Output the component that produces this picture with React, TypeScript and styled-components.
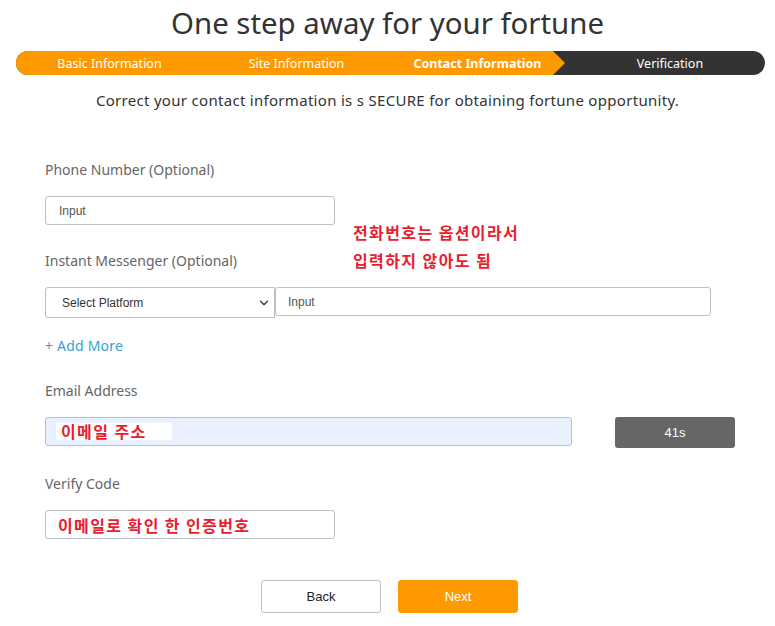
import styled, { createGlobalStyle, css } from "styled-components";
import { ChevronDown } from "lucide-react";

const GlobalStyle = createGlobalStyle`
  html, body {
    margin: 0;
    padding: 0;
    background: #fff;
  }
  body {
    font-family: "Noto Sans", "Open Sans", sans-serif;
    color: #333;
  }
`;

const steps = [
  { label: "Basic Information", state: "done" },
  { label: "Site Information", state: "done" },
  { label: "Contact Information", state: "current" },
  { label: "Verification", state: "todo" },
] as const;

type StepState = (typeof steps)[number]["state"];

const App = () => {
  return (
    <Page>
      <GlobalStyle />
      <Title>One step away for your fortune</Title>
      <Progress>
        {steps.map((s) => (
          <Step key={s.label} $state={s.state}>
            {s.label}
          </Step>
        ))}
      </Progress>
      <Subtitle>Correct your contact information is s SECURE for obtaining fortune opportunity.</Subtitle>

      <Form>
        <Label>Phone Number (Optional)</Label>
        <PhoneRow>
          <TextInput $width={290} placeholder="Input" />
          <Note>
            전화번호는 옵션이라서
            <br />
            입력하지 않아도 됨
          </Note>
        </PhoneRow>

        <Label $top={26}>Instant Messenger (Optional)</Label>
        <MessengerRow>
          <SelectBox>
            <span>Select Platform</span>
            <ChevronDown size={14} strokeWidth={2.6} color="#444" />
          </SelectBox>
          <TextInput $width={436} $pad={12} placeholder="Input" />
        </MessengerRow>

        <AddMore>+ Add More</AddMore>

        <Label $top={25}>Email Address</Label>
        <EmailRow>
          <FieldBox $width={527} $filled>
            <Highlight>이메일 주소</Highlight>
          </FieldBox>
          <TimerButton>41s</TimerButton>
        </EmailRow>

        <Label $top={26}>Verify Code</Label>
        <FieldBox $width={290}>
          <NoteInline>이메일로 확인 한 인증번호</NoteInline>
        </FieldBox>
      </Form>

      <Actions>
        <ActionButton>Back</ActionButton>
        <ActionButton $primary>Next</ActionButton>
      </Actions>
    </Page>
  );
};

const Page = styled.div`
  width: 775px;
  padding-bottom: 12px;
`;

const Title = styled.h1`
  margin: 0;
  padding-top: 1px;
  font-size: 29.4px;
  font-weight: 400;
  line-height: 44px;
  text-align: center;
  color: #333;
`;

const Progress = styled.div`
  display: flex;
  margin: 6px 0 0 16px;
  width: 749px;
  height: 24px;
  border-radius: 12px;
  overflow: hidden;
  background: #333;
`;

const Step = styled.div<{ $state: StepState }>`
  display: flex;
  align-items: center;
  justify-content: center;
  height: 100%;
  font-size: 12.5px;
  color: #fff;
  white-space: nowrap;
  ${({ $state }) =>
    $state === "done" &&
    css`
      width: 187px;
      background: #ff9900;
    `}
  ${({ $state }) =>
    $state === "current" &&
    css`
      width: 175px;
      font-weight: 700;
      background: #ff9900;
      clip-path: polygon(0 0, calc(100% - 12px) 0, 100% 50%, calc(100% - 12px) 100%, 0 100%);
    `}
  ${({ $state }) =>
    $state === "todo" &&
    css`
      flex: 1;
      padding-left: 10px;
    `}
`;

const Subtitle = styled.p`
  margin: 14px 0 0;
  font-size: 15px;
  line-height: 22px;
  letter-spacing: 0.3px;
  text-align: center;
  color: #333;
`;

const Form = styled.div`
  display: flex;
  flex-direction: column;
  align-items: flex-start;
  padding: 0 0 0 45px;
  margin-top: 49px;
`;

const Label = styled.div<{ $top?: number }>`
  margin-top: ${({ $top }) => $top ?? 0}px;
  font-size: 14px;
  line-height: 20px;
  color: #666;
`;

const PhoneRow = styled.div`
  position: relative;
  margin-top: 16px;
`;

const inputBase = css`
  box-sizing: border-box;
  height: 29px;
  border: 1px solid #bcc0c8;
  border-radius: 3px;
  background: #fff;
  font-family: "Liberation Sans", Arial, sans-serif;
  font-size: 12px;
  color: #555;
`;

const TextInput = styled.input<{ $width: number; $pad?: number }>`
  ${inputBase};
  display: block;
  width: ${({ $width }) => $width}px;
  padding: 0 0 0 ${({ $pad }) => $pad ?? 13}px;
  outline: none;
  &::placeholder {
    color: #555;
  }
`;

const koreanNote = css`
  font-family: "Noto Sans CJK KR", sans-serif;
  font-size: 16px;
  font-weight: 700;
  letter-spacing: 1.4px;
  color: #e8202e;
`;

const Note = styled.div`
  ${koreanNote};
  position: absolute;
  left: 308px;
  top: 22px;
  line-height: 28px;
  white-space: nowrap;
`;

const MessengerRow = styled.div`
  display: flex;
  align-items: flex-start;
  margin-top: 16px;
`;

const SelectBox = styled.div`
  ${inputBase};
  display: flex;
  align-items: center;
  justify-content: space-between;
  width: 230px;
  height: 31px;
  padding: 0 3px 0 16px;
  color: #333;
  border-radius: 3px 0 0 3px;
`;

const AddMore = styled.div`
  margin-top: 18px;
  font-size: 14px;
  line-height: 20px;
  letter-spacing: 0.2px;
  color: #3a9fd2;
`;

const EmailRow = styled.div`
  display: flex;
  align-items: flex-start;
  gap: 43px;
  margin-top: 16px;
`;

const FieldBox = styled.div<{ $width: number; $filled?: boolean }>`
  ${inputBase};
  display: flex;
  align-items: center;
  width: ${({ $width }) => $width}px;
  padding-left: 10px;
  margin-top: ${({ $filled }) => ($filled ? 0 : 16)}px;
  background: ${({ $filled }) => ($filled ? "#e8f0fe" : "#fff")};
`;

const Highlight = styled.span`
  ${koreanNote};
  display: block;
  width: 111px;
  height: 17px;
  line-height: 17px;
  padding-left: 5px;
  background: #fff;
`;

const NoteInline = styled.span`
  ${koreanNote};
  padding-left: 2px;
`;

const TimerButton = styled.div`
  display: flex;
  align-items: center;
  justify-content: center;
  width: 120px;
  height: 31px;
  border-radius: 3px;
  background: #666;
  color: #fff;
  font-family: "Liberation Sans", Arial, sans-serif;
  font-size: 13px;
`;

const Actions = styled.div`
  display: flex;
  justify-content: center;
  gap: 17px;
  margin-top: 41px;
  padding-left: 4px;
`;

const ActionButton = styled.button<{ $primary?: boolean }>`
  box-sizing: border-box;
  width: 120px;
  height: 33px;
  border-radius: 3px;
  font-family: "Liberation Sans", Arial, sans-serif;
  font-size: 13px;
  cursor: pointer;
  border: 1px solid ${({ $primary }) => ($primary ? "#ff9900" : "#bcc0c8")};
  background: ${({ $primary }) => ($primary ? "#ff9900" : "#fff")};
  color: ${({ $primary }) => ($primary ? "#fff" : "#222")};
`;

export default App;
